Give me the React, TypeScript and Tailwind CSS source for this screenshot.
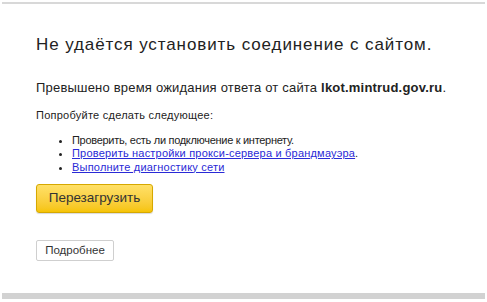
import React from "react";

export default function App() {
  return (
    <div
      className="w-[487px] h-[302px] bg-white overflow-hidden flex flex-col px-[2px]"
      style={{ fontFamily: '"Liberation Sans", Arial, sans-serif' }}
    >
      <div className="mt-[2px] h-[2px] bg-[#d8d8d8]" />
      <div className="flex-1 pl-[34px] text-[#222]">
        <h1 className="mt-[31px] text-[17px] leading-[20px] font-normal tracking-[0.9px]">
          Не удаётся установить соединение с сайтом.
        </h1>
        <p className="mt-[25px] text-[13px] leading-[16px] tracking-[0.2px]">
          Превышено время ожидания ответа от сайта <b>lkot.mintrud.gov.ru</b>.
        </p>
        <p className="mt-[13px] text-[11px] leading-[13px] tracking-[0.25px]">
          Попробуйте сделать следующее:
        </p>
        <ul className="mt-[12px] text-[11px] leading-[13.3px] pl-[36px] list-disc">
          <li className="tracking-[-0.3px]">Проверить, есть ли подключение к интернету.</li>
          <li>
            <a className="text-[#2a2ad6] underline tracking-[0.2px]" href="#">
              Проверить настройки прокси-сервера и брандмауэра
            </a>
            .
          </li>
          <li>
            <a className="text-[#2a2ad6] underline tracking-[0.2px]" href="#">
              Выполните диагностику сети
            </a>
          </li>
        </ul>
        <button className="mt-[10px] w-[117px] h-[29px] rounded-[3px] border border-[#d6a800] bg-gradient-to-b from-[#ffe066] to-[#f6c400] text-[13.5px] text-[#333] flex items-center justify-center shadow-[0_1px_1px_rgba(0,0,0,0.15)]">
          Перезагрузить
        </button>
        <button className="mt-[27px] w-[78px] h-[21px] rounded-[2px] border border-[#cfcfcf] bg-white text-[11.5px] text-[#333] flex items-center justify-center">
          Подробнее
        </button>
      </div>
      <div className="h-[6px] bg-[#d2d2d2] mb-[3px]" />
    </div>
  );
}
